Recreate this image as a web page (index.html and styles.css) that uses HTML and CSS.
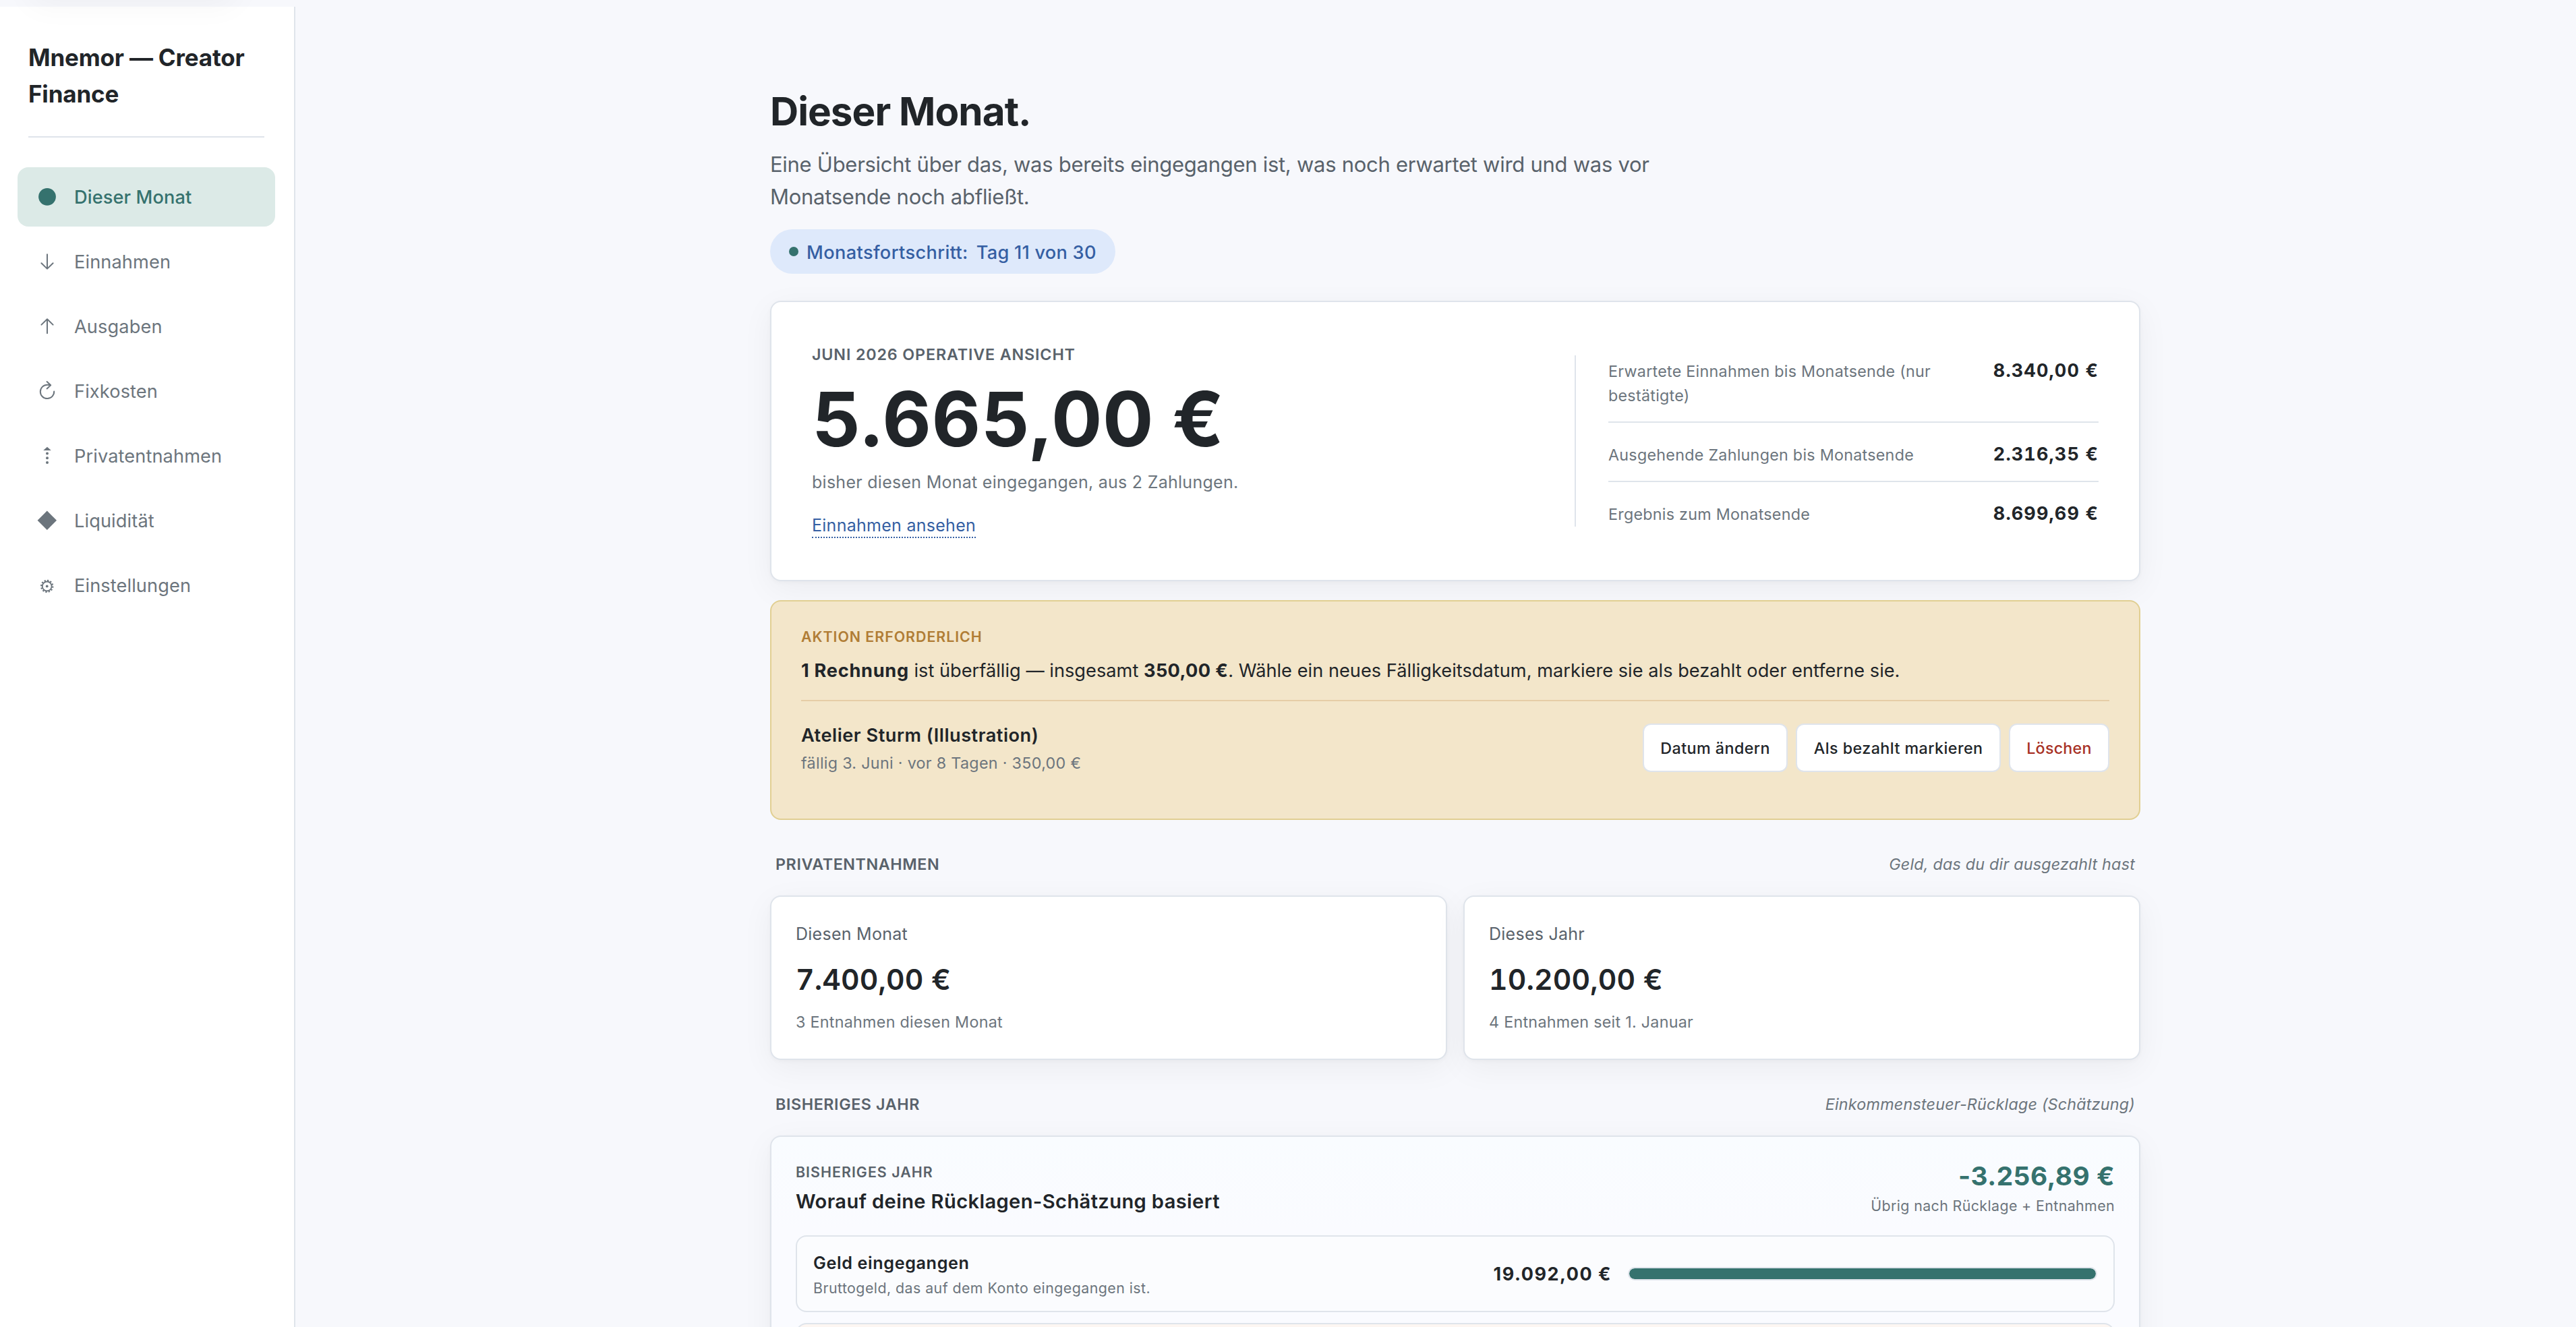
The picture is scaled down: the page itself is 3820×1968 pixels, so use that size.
FILE: index.html
```
<!DOCTYPE html>
<html lang="de">
<head>
<meta charset="utf-8">
<title>Mnemor — Creator Finance</title>
<link rel="stylesheet" href="styles.css">
</head>
<body>
<div class="skip-shadow"></div>
<div class="app">
  <aside class="sidebar">
    <div class="brand">Mnemor — Creator Finance</div>
    <nav class="nav">
      <a class="nav-item active"><svg class="icon" viewBox="0 0 32 32"><circle cx="16" cy="15.8" r="12.9" fill="currentColor"/></svg>Dieser Monat</a>
      <a class="nav-item"><svg class="icon line" viewBox="0 0 32 32"><path d="M16 5.2v21M7.4 18.2l8.6 8.4 8.6-8.4"/></svg>Einnahmen</a>
      <a class="nav-item"><svg class="icon line" viewBox="0 0 32 32"><path d="M16 26.2v-21M7.4 13.6L16 5.2l8.6 8.4"/></svg>Ausgaben</a>
      <a class="nav-item"><svg class="icon line" viewBox="0 0 32 32"><path d="M26.2 16.4A10.2 10.2 0 1 1 16.2 6.7Q18.8 6.6 21.2 7.3M15.6 2L21.2 7.3l-5.6 5.1"/></svg>Fixkosten</a>
      <a class="nav-item"><svg class="icon" viewBox="0 0 32 32" fill="currentColor"><path d="M16 2.8L21.8 8H10.2z"/><circle cx="16" cy="12.5" r="2"/><circle cx="16" cy="19.3" r="2"/><circle cx="16" cy="26" r="2"/></svg>Privatentnahmen</a>
      <a class="nav-item"><svg class="icon" viewBox="0 0 32 32"><path d="M15.8 1.6L30 15.8 15.8 30 1.6 15.8z" fill="currentColor"/></svg>Liquidität</a>
      <a class="nav-item"><svg class="icon" viewBox="0 0 32 32" fill="none" stroke="currentColor"><circle cx="15.7" cy="17.4" r="6.9" stroke-width="1.8"/><circle cx="15.7" cy="17.4" r="8.6" stroke-width="2.2" stroke-dasharray="2.3 2.203"/><circle cx="15.7" cy="17.4" r="1.9" fill="currentColor" stroke="none"/></svg>Einstellungen</a>
    </nav>
  </aside>

  <main class="main">
    <h1 class="title">Dieser Monat.</h1>
    <p class="lead">Eine Übersicht über das, was bereits eingegangen ist, was noch erwartet wird und was vor Monatsende noch abfließt.</p>
    <div class="pill"><span class="pill-dot"></span><span class="pill-label">Monatsfortschritt:</span><span class="pill-value">Tag 11 von 30</span></div>

    <section class="card hero">
      <div>
        <div class="hero-label">JUNI 2026 OPERATIVE ANSICHT</div>
        <div class="hero-amount">5.665,00 €</div>
        <div class="hero-note">bisher diesen Monat eingegangen, aus 2 Zahlungen.</div>
        <a class="hero-link">Einnahmen ansehen</a>
      </div>
      <div class="forecast">
        <div class="forecast-row first"><span>Erwartete Einnahmen bis Monatsende (nur bestätigte)</span><b>8.340,00 €</b></div>
        <div class="forecast-row"><span>Ausgehende Zahlungen bis Monatsende</span><b>2.316,35 €</b></div>
        <div class="forecast-row last"><span>Ergebnis zum Monatsende</span><b>8.699,69 €</b></div>
      </div>
    </section>

    <section class="alert">
      <div class="alert-label">AKTION ERFORDERLICH</div>
      <div class="alert-text"><b>1 Rechnung</b> ist überfällig — insgesamt <b class="sum">350,00 €</b>. Wähle ein neues Fälligkeitsdatum, markiere sie als bezahlt oder entferne sie.</div>
      <div class="alert-row">
        <div>
          <div class="invoice-name">Atelier Sturm (Illustration)</div>
          <div class="invoice-meta">fällig 3. Juni · vor 8 Tagen · 350,00 €</div>
        </div>
        <div class="actions">
          <button class="btn">Datum ändern</button>
          <button class="btn">Als bezahlt markieren</button>
          <button class="btn danger">Löschen</button>
        </div>
      </div>
    </section>

    <div class="section-head"><h2>PRIVATENTNAHMEN</h2><em>Geld, das du dir ausgezahlt hast</em></div>
    <div class="stats">
      <div class="card stat">
        <div class="stat-label">Diesen Monat</div>
        <div class="stat-value">7.400,00 €</div>
        <div class="stat-note">3 Entnahmen diesen Monat</div>
      </div>
      <div class="card stat">
        <div class="stat-label">Dieses Jahr</div>
        <div class="stat-value">10.200,00 €</div>
        <div class="stat-note">4 Entnahmen seit 1. Januar</div>
      </div>
    </div>

    <div class="section-head"><h2>BISHERIGES JAHR</h2><em>Einkommensteuer-Rücklage (Schätzung)</em></div>
    <section class="card year">
      <div class="year-head">
        <div>
          <div class="year-label">BISHERIGES JAHR</div>
          <div class="year-title">Worauf deine Rücklagen-Schätzung basiert</div>
        </div>
        <div class="year-result">
          <div class="year-amount">-3.256,89 €</div>
          <div class="year-note">Übrig nach Rücklage + Entnahmen</div>
        </div>
      </div>
      <div class="flow">
        <div class="flow-text">
          <div class="flow-name">Geld eingegangen</div>
          <div class="flow-note">Bruttogeld, das auf dem Konto eingegangen ist.</div>
        </div>
        <b class="flow-value">19.092,00 €</b>
        <div class="bar"><div class="bar-fill" style="width:100%"></div></div>
      </div>
      <div class="flow out"></div>
    </section>
  </main>
</div>
</body>
</html>
```
FILE: styles.css
```
* { box-sizing: border-box; }

body {
  margin: 0;
  height: 1968px;
  overflow: hidden;
  background: #f7f8fc;
  color: #212529;
  font-family: Inter, "Liberation Sans", sans-serif;
}

.app { display: flex; height: 1968px; overflow: hidden; }

.skip-shadow {
  position: absolute;
  left: 44px;
  top: -106px;
  width: 306px;
  height: 92px;
  border-radius: 16px;
  box-shadow: 0 20px 48px rgba(0, 0, 0, .045);
}

/* Sidebar */
.sidebar {
  flex: none;
  width: 438px;
  margin-top: 10px;
  padding: 48px 28px 0 26px;
  background: #fff;
  border-right: 2px solid #dfe4eb;
}
.brand {
  margin: 0 16px 44px;
  padding-bottom: 36px;
  border-bottom: 2px solid #dfe4eb;
  font-size: 35px;
  font-weight: 700;
  line-height: 54px;
  letter-spacing: -.18px;
}
.nav { display: flex; flex-direction: column; gap: 8px; }
.nav-item {
  display: flex;
  align-items: center;
  gap: 24px;
  height: 88px;
  padding-left: 28px;
  border-radius: 16px;
  color: #6c757d;
  font-size: 27.2px;
  letter-spacing: .11px;
}
.nav-item.active { background: #dceae7; color: #35726e; font-weight: 500; }
.icon { width: 32px; height: 32px; flex: none; }
.icon.line { fill: none; stroke: currentColor; stroke-width: 2; stroke-linecap: round; stroke-linejoin: round; }

/* Page */
.main { width: 2032px; margin-left: 704px; padding-top: 130px; flex: none; }
.title { margin: 0 0 21px; font-size: 58.4px; font-weight: 700; line-height: 69px; letter-spacing: -.97px; }
.lead { margin: 0 0 24px; width: 1340px; font-size: 31px; line-height: 48px; letter-spacing: -.28px; color: #59626b; }
.pill {
  display: flex;
  align-items: center;
  width: 512px;
  height: 66px;
  margin-bottom: 40px;
  padding-left: 28px;
  border-radius: 33px;
  background: #dee9fb;
  color: #355fa3;
  font-size: 27.2px;
  font-weight: 500;
  letter-spacing: .24px;
}
.pill-dot { width: 14px; height: 14px; margin-right: 12px; border-radius: 50%; background: #35726e; }
.pill-label { margin-right: 12px; padding-top: 3px; letter-spacing: .37px; }
.pill-value { padding-top: 3px; }

.card {
  background: #fff;
  border: 2px solid #dfe4eb;
  border-radius: 16px;
  box-shadow: 0 2px 6px rgba(0, 0, 0, .03), 0 12px 48px rgba(0, 0, 0, .05);
}

/* Monthly overview */
.hero {
  display: grid;
  grid-template-columns: 1fr 777px;
  align-items: center;
  height: 416px;
  margin-bottom: 28px;
  padding: 60px;
}
.hero > div:first-child { align-self: start; }
.hero-label { font-size: 23.3px; font-weight: 600; line-height: 35px; letter-spacing: .85px; color: #59626b; }
.hero-amount { margin: 18px 0 16px; font-size: 112px; font-weight: 700; line-height: 120px; letter-spacing: .55px; white-space: nowrap; }
.hero-note { margin-bottom: 28px; font-size: 25px; line-height: 36px; letter-spacing: .27px; color: #6c757d; }
.hero-link {
  display: block;
  width: max-content;
  height: 37px;
  border-bottom: 2px dotted #355fa3;
  font-size: 25px;
  line-height: 36px;
  letter-spacing: .27px;
  color: #355fa3;
}
.forecast { padding-left: 48px; border-left: 2px solid #dfe4eb; }
.forecast-row {
  display: flex;
  align-items: baseline;
  justify-content: space-between;
  gap: 48px;
  height: 88px;
  padding-top: 25px;
  border-bottom: 2px solid #dfe4eb;
  font-size: 23.3px;
  line-height: 36px;
  letter-spacing: .26px;
  color: #6c757d;
}
.forecast-row.first { height: 100px; padding-top: 1px; }
.forecast-row.last { height: 66px; border-bottom: 0; }
.forecast-row b {
  flex: none;
  font-size: 27px;
  line-height: 43px;
  letter-spacing: 1.12px;
  font-variant-numeric: tabular-nums;
  color: #212529;
}

/* Overdue invoices */
.alert {
  height: 326px;
  padding: 36px 44px 0;
  background: #f3e6ca;
  border: 2px solid #e1cf92;
  border-radius: 16px;
}
.alert-label { font-size: 21.4px; font-weight: 600; line-height: 32px; letter-spacing: .95px; color: #b07d35; }
.alert-text { margin: 12px 0 21px; font-size: 27.2px; line-height: 45px; letter-spacing: .02px; }
.alert-text b { letter-spacing: .7px; }
.alert-text .sum { letter-spacing: .34px; }
.alert-row {
  display: flex;
  align-items: center;
  justify-content: space-between;
  padding-top: 29px;
  border-top: 2px solid #e6cda6;
}
.invoice-name { margin-bottom: 2px; font-size: 27.2px; font-weight: 600; line-height: 43px; letter-spacing: .5px; }
.invoice-meta { font-size: 23.3px; line-height: 35px; letter-spacing: .3px; color: #6c757d; }
.actions { display: flex; gap: 12px; }
.btn {
  height: 72px;
  padding: 1px 24.4px 0;
  background: #fff;
  border: 2px solid #dfe4eb;
  border-radius: 12px;
  color: #212529;
  font: 500 23.3px/36px Inter, "Liberation Sans", sans-serif;
  letter-spacing: .43px;
}
.btn.danger { color: #a83226; letter-spacing: .2px; }

/* Sections */
.section-head {
  display: flex;
  justify-content: space-between;
  padding: 48px 8px 29px;
  font-size: 23.3px;
  line-height: 35px;
}
.stats + .section-head { padding-top: 48px; padding-bottom: 29px; }
.section-head h2 { margin: 0; font-size: inherit; font-weight: 600; letter-spacing: .58px; color: #59626b; }
.section-head em { letter-spacing: .22px; color: #6c757d; }

.stats { display: grid; grid-template-columns: 1fr 1fr; gap: 24px; }
.stat { height: 244px; padding: 36px; }
.stat-label { font-size: 25px; line-height: 38px; letter-spacing: .26px; color: #59626b; }
.stat-value { margin: 20px 0 17px; font-size: 42.7px; font-weight: 600; line-height: 57px; letter-spacing: .1px; font-variant-numeric: tabular-nums; }
.stat-note { font-size: 23.3px; line-height: 35px; letter-spacing: .27px; color: #6c757d; }

/* Year to date */
.year { height: 700px; padding: 36px; background: linear-gradient(#f9fcff, #fafbff 140px); }
.year-head { display: flex; justify-content: space-between; margin-bottom: 28px; }
.year-label { font-size: 21.4px; font-weight: 600; line-height: 32px; letter-spacing: 1.02px; color: #59626b; }
.year-title { margin: 6px 0 1px; font-size: 29.1px; font-weight: 600; line-height: 43px; letter-spacing: .38px; }
.year-result { text-align: right; }
.year-amount { font-size: 38.8px; font-weight: 700; line-height: 43px; letter-spacing: .5px; color: #35726e; }
.year-note { margin-top: 7px; font-size: 21.4px; line-height: 32px; letter-spacing: .37px; color: #6c757d; }
.flow {
  display: grid;
  grid-template-columns: 1fr auto 696px;
  align-items: center;
  gap: 24px;
  height: 114px;
  margin-bottom: 16px;
  padding: 0 24px;
  background: #fbfcfe;
  border: 2px solid #dfe4eb;
  border-radius: 16px;
}
.flow.out { background: #fdf6f2; }
.flow-text { padding-top: 3px; }
.flow-name { margin-bottom: 3px; font-size: 25.2px; font-weight: 600; line-height: 36px; letter-spacing: .62px; }
.flow-note { font-size: 21.4px; line-height: 32px; letter-spacing: .43px; color: #6c757d; }
.flow-value { padding-top: 1px; font-size: 27px; letter-spacing: 1.5px; }
.bar { height: 20px; border: 2px solid #dfe4eb; border-radius: 10px; background: #eef1f5; overflow: hidden; }
.bar-fill { height: 100%; border-radius: 8px; background: #35726e; }
```
